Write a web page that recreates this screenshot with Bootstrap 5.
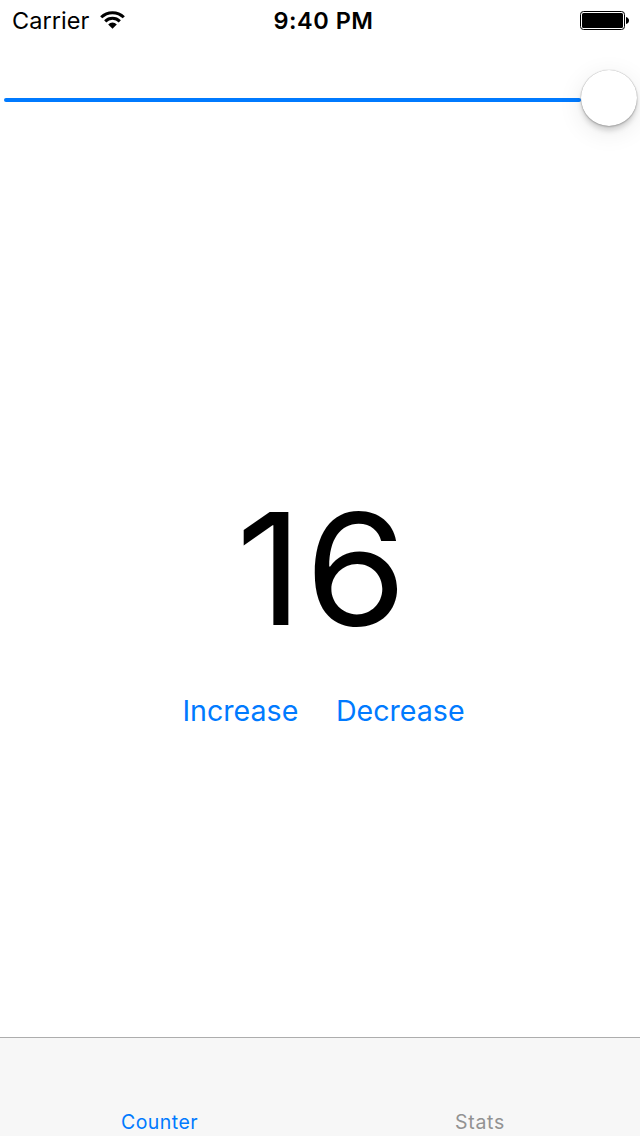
<!DOCTYPE html>
<html lang="en">
<head>
<meta charset="utf-8">
<meta name="viewport" content="width=device-width, initial-scale=1">
<title>Counter</title>
<link href="https://cdn.jsdelivr.net/npm/bootstrap@5.3.0/dist/css/bootstrap.min.css" rel="stylesheet">
<style>
body{font-family:Inter,"Liberation Sans",sans-serif;color:#000;background:#fff;height:1136px;overflow:hidden}
.statusbar{height:41px;padding:1px 11px 0 12px;font-size:23.5px;line-height:40px}
.statusbar .side{flex:1 1 0}
.carrier{letter-spacing:.05px}
.wifi{margin:0 0 2px 11px}
.clock{font-weight:570;letter-spacing:.5px;margin-left:6px}
.slider{height:58px;margin:28px 3px 0 4px}
.track{height:4px;border-radius:2px;background:#007aff;margin-top:4px}
.thumb{width:56px;height:56px;border-radius:50%;background:#fff;box-shadow:0 0 1px rgba(0,0,0,.4),0 6px 26px rgba(0,0,0,.09),0 5px 5px rgba(0,0,0,.13),0 1px 2px rgba(0,0,0,.2)}
.count{font-size:155px;line-height:160px;margin-top:362px;letter-spacing:2px;padding-left:6px}
.count span{display:inline-block;transform:scaleX(1.06)}
.actions{margin-top:44px;gap:37.5px;padding-left:7px}
.actions .btn{font-size:28.6px;line-height:36px;color:#007aff}
.tabs{height:99px;background:#f7f7f7;border-top:1px solid #adadad;font-size:19.5px;line-height:24px;letter-spacing:.45px}
.tabs a{color:#929292;padding-bottom:2px;letter-spacing:.7px}
.tabs a.active{color:#007aff;padding-right:1px;letter-spacing:.45px}
</style>
</head>
<body class="d-flex flex-column">
<header class="statusbar d-flex align-items-center">
<div class="side d-flex align-items-center"><span class="carrier">Carrier</span>
<svg class="wifi" width="25" height="18" viewBox="0 0 25 18"><g fill="none" stroke="#000" stroke-width="3"><path d="M1.2 6.3A16 16 0 0 1 23.8 6.3"/><path d="M5.2 10.4A10.3 10.3 0 0 1 19.8 10.4"/></g><path d="M12.5 17.7L8.2 13.4A6 6 0 0 1 16.8 13.4Z"/></svg></div>
<div class="clock">9:40 PM</div>
<div class="side d-flex justify-content-end"><svg width="49" height="20" viewBox="0 0 49 20"><rect x=".5" y=".5" width="44" height="18" rx="3" fill="none" stroke="#000"/><rect x="2" y="2" width="41" height="15" rx="1.5"/><path d="M46 6q3 1 3 3.5t-3 3.5z"/></svg></div>
</header>
<div class="slider d-flex align-items-center"><div class="track flex-grow-1"></div><div class="thumb flex-shrink-0"></div></div>
<main class="flex-grow-1"><div class="count text-center"><span>16</span></div>
<div class="actions d-flex justify-content-center"><button class="btn border-0 p-0">Increase</button><button class="btn border-0 p-0">Decrease</button></div></main>
<nav class="tabs d-flex flex-shrink-0"><a class="active w-50 d-flex align-items-end justify-content-center text-decoration-none" href="#">Counter</a><a class="w-50 d-flex align-items-end justify-content-center text-decoration-none" href="#">Stats</a></nav>
<script src="https://cdn.jsdelivr.net/npm/bootstrap@5.3.0/dist/js/bootstrap.bundle.min.js"></script>
</body>
</html>
